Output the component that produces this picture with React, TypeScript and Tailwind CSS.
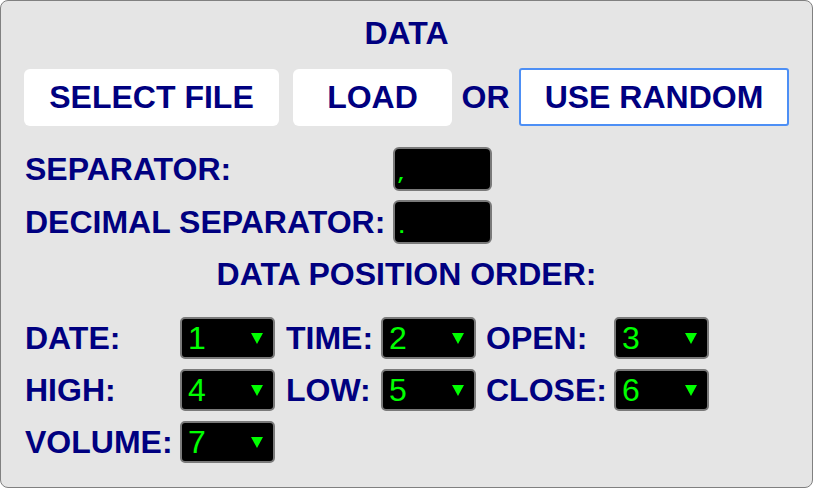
import React from 'react';

const Arrow = () => (
  <svg width="12" height="11" viewBox="0 0 12 11" className="block">
    <polygon points="0,0 12,0 6,11" fill="#00ff00" />
  </svg>
);

const Select = ({ value }: { value: string }) => (
  <div className="flex h-[42px] w-[95px] items-center justify-between rounded-[5px] border-2 border-[#7a7a7a] bg-black pl-[6px] pr-[10px]">
    <span className="text-[32px] font-normal leading-none text-[#00ff00]">{value}</span>
    <Arrow />
  </div>
);

const TextBox = ({ value }: { value: string }) => (
  <div className="flex h-[44px] w-[99px] items-end rounded-[6px] border-2 border-[#7a7a7a] bg-black pb-[6px] pl-[1px]">
    <span className="font-['Liberation_Mono',monospace] text-[19px] font-bold leading-[16px] text-[#00ff00]">{value}</span>
  </div>
);

const order = [
  ['DATE:', '1', 'TIME:', '2', 'OPEN:', '3'],
  ['HIGH:', '4', 'LOW:', '5', 'CLOSE:', '6'],
];

export default function App() {
  return (
    <div className="h-[488px] w-[813px] rounded-[8px] border border-[#808080] bg-[#e5e5e5] font-['Liberation_Sans',Arial,sans-serif] text-[32px] font-bold leading-[36px] text-[#000080]">
      {/* Title */}
      <div className="pt-[14px] text-center">DATA</div>

      {/* Source buttons */}
      <div className="mt-[17px] flex items-center pl-[23px]">
        <button className="h-[57px] w-[255px] rounded-[6px] bg-white">SELECT FILE</button>
        <button className="ml-[14px] h-[57px] w-[159px] rounded-[6px] bg-white">LOAD</button>
        <span className="w-[67px] text-center">OR</span>
        <button className="h-[58px] w-[270px] rounded-[3px] border-2 border-[#4d8ff5] bg-white">USE RANDOM</button>
      </div>

      {/* Separators */}
      <div className="mt-[21px] flex flex-col gap-[9px] pl-[24px]">
        <div className="flex items-center">
          <div className="w-[368px]">SEPARATOR:</div>
          <TextBox value="," />
        </div>
        <div className="flex items-center">
          <div className="w-[368px]">DECIMAL SEPARATOR:</div>
          <TextBox value="." />
        </div>
      </div>

      <div className="mt-[12px] text-center">DATA POSITION ORDER:</div>

      {/* Column order */}
      <div className="mt-[25px] grid grid-cols-[155px_95px_106px_94px_139px_95px] gap-y-[10px] pl-[24px]">
        {order.map((row) => (
          <React.Fragment key={row[0]}>
            <div className="flex items-center">{row[0]}</div>
            <Select value={row[1]} />
            <div className="flex items-center pl-[11px]">{row[2]}</div>
            <Select value={row[3]} />
            <div className="flex items-center pl-[11px]">{row[4]}</div>
            <Select value={row[5]} />
          </React.Fragment>
        ))}
        <div className="flex items-center">VOLUME:</div>
        <Select value="7" />
      </div>
    </div>
  );
}
